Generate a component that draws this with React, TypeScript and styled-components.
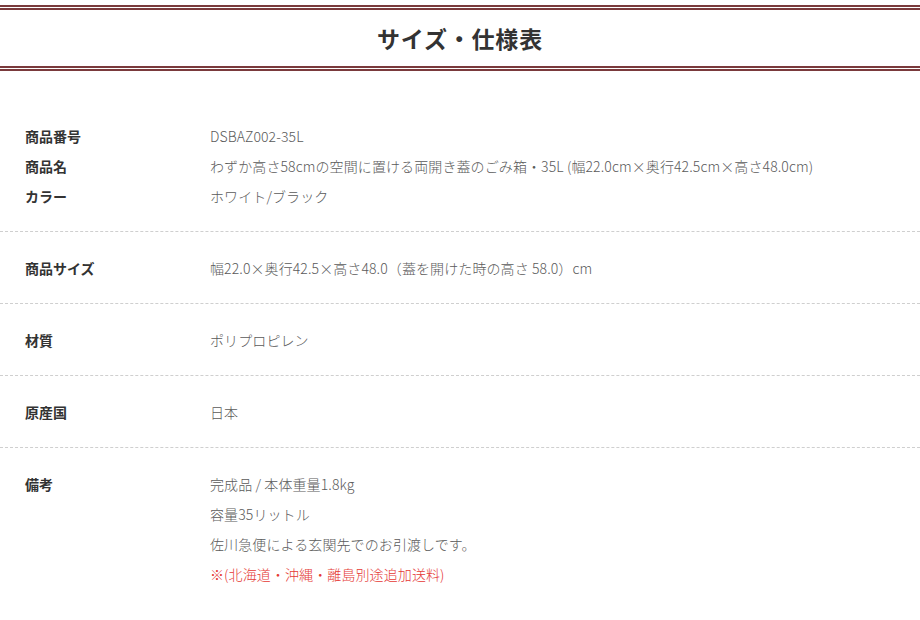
import React from "react";
import styled, { createGlobalStyle } from "styled-components";

const GlobalStyle = createGlobalStyle`
  body {
    margin: 0;
    background: #fff;
    font-family: "Noto Sans CJK JP", "Noto Sans", sans-serif;
  }
`;

const Page = styled.div`
  width: 920px;
  padding-top: 5px;
`;

const Header = styled.header`
  border-top: 5px double #7a3a3c;
  border-bottom: 5px double #7a3a3c;
  height: 56px;
  display: flex;
  align-items: center;
  justify-content: center;
`;

const Title = styled.h2`
  margin: 0;
  font-size: 23px;
  font-weight: 700;
  color: #333;
  letter-spacing: 0.8px;
`;

const Table = styled.div`
  margin-top: 29px;
`;

const Section = styled.section<{ $last?: boolean }>`
  padding: 21px 0 20px;
  border-bottom: ${(p) => (p.$last ? "none" : "1px dashed #cfcfcf")};
`;

const Row = styled.div`
  display: grid;
  grid-template-columns: 185px 1fr;
  padding-left: 25px;
  line-height: 30px;
  font-size: 14px;
`;

const Label = styled.div`
  font-weight: 700;
  color: #333;
`;

const Value = styled.div`
  color: #5a5a5a;
  font-weight: 300;
  letter-spacing: 0.1px;
`;

const Line = styled.div<{ $red?: boolean }>`
  color: ${(p) => (p.$red ? "#e53935" : "inherit")};
`;

type Item = { label: string; lines: { text: string; red?: boolean }[] };

const sections: Item[][] = [
  [
    { label: "商品番号", lines: [{ text: "DSBAZ002-35L" }] },
    {
      label: "商品名",
      lines: [
        {
          text: "わずか高さ58cmの空間に置ける両開き蓋のごみ箱・35L (幅22.0cm×奥行42.5cm×高さ48.0cm)",
        },
      ],
    },
    { label: "カラー", lines: [{ text: "ホワイト/ブラック" }] },
  ],
  [
    {
      label: "商品サイズ",
      lines: [{ text: "幅22.0×奥行42.5×高さ48.0（蓋を開けた時の高さ 58.0）cm" }],
    },
  ],
  [{ label: "材質", lines: [{ text: "ポリプロピレン" }] }],
  [{ label: "原産国", lines: [{ text: "日本" }] }],
  [
    {
      label: "備考",
      lines: [
        { text: "完成品 / 本体重量1.8kg" },
        { text: "容量35リットル" },
        { text: "佐川急便による玄関先でのお引渡しです。" },
        { text: "※(北海道・沖縄・離島別途追加送料)", red: true },
      ],
    },
  ],
];

export default function App() {
  return (
    <Page>
      <GlobalStyle />
      <Header>
        <Title>サイズ・仕様表</Title>
      </Header>
      <Table>
        {sections.map((items, i) => (
          <Section key={i} $last={i === sections.length - 1}>
            {items.map((item) => (
              <Row key={item.label}>
                <Label>{item.label}</Label>
                <Value>
                  {item.lines.map((l, j) => (
                    <Line key={j} $red={l.red}>
                      {l.text}
                    </Line>
                  ))}
                </Value>
              </Row>
            ))}
          </Section>
        ))}
      </Table>
    </Page>
  );
}
